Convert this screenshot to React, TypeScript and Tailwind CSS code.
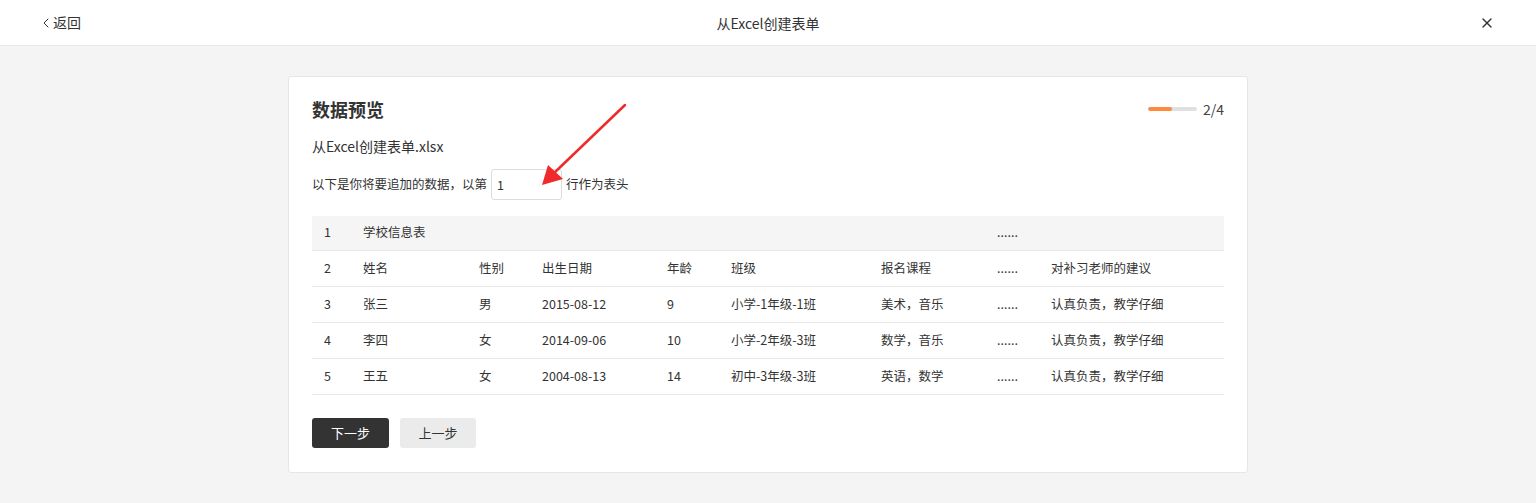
import { ChevronLeft, X } from 'lucide-react';

const cols = [
  { w: 'w-[39px]' },
  { w: 'w-[116px]' },
  { w: 'w-[63px]' },
  { w: 'w-[125px]' },
  { w: 'w-[64px]' },
  { w: 'w-[150px]' },
  { w: 'w-[116px]' },
  { w: 'w-[54px]' },
  { w: 'w-auto' },
];

const rows: string[][] = [
  ['1', '学校信息表', '', '', '', '', '', '......', ''],
  ['2', '姓名', '性别', '出生日期', '年龄', '班级', '报名课程', '......', '对补习老师的建议'],
  ['3', '张三', '男', '2015-08-12', '9', '小学-1年级-1班', '美术，音乐', '......', '认真负责，教学仔细'],
  ['4', '李四', '女', '2014-09-06', '10', '小学-2年级-3班', '数学，音乐', '......', '认真负责，教学仔细'],
  ['5', '王五', '女', '2004-08-13', '14', '初中-3年级-3班', '英语，数学', '......', '认真负责，教学仔细'],
];

export default function App() {
  return (
    <div className="min-h-[503px] bg-[#f4f4f4] font-['Noto_Sans_CJK_SC','Noto_Sans',sans-serif] text-[#333]">
      {/* Header */}
      <div className="h-[46px] bg-white border-b border-[#e8e8e8] flex items-center justify-between px-[38px]">
        <button className="flex items-center text-[14px] text-[#333] w-[120px]">
          <ChevronLeft className="w-[16px] h-[16px] -mr-[1px]" strokeWidth={1.5} />
          返回
        </button>
        <div className="text-[14px] leading-none">从Excel创建表单</div>
        <div className="w-[120px] flex justify-end pr-[3px]">
          <X className="w-[16px] h-[16px]" strokeWidth={2} />
        </div>
      </div>

      {/* Card */}
      <div className="pt-[30px] pb-[30px] flex justify-center">
        <div className="relative w-[960px] bg-white border border-[#e6e6e6] rounded-[3px] pl-[23px] pr-[23px] pt-[18px] pb-[24px]">
          <div className="flex items-center justify-between h-[28px]">
            <h2 className="text-[18px] font-bold leading-none">数据预览</h2>
            <div className="flex items-center gap-[6px]">
              <div className="w-[49px] h-[4px] rounded-full bg-[#e0e0e0] overflow-hidden">
                <div className="w-[24px] h-full bg-[#ff8a3d] rounded-full" />
              </div>
              <span className="text-[14px] text-[#444] leading-none">2/4</span>
            </div>
          </div>

          <div className="mt-[13px] text-[14px] leading-[20px]">从Excel创建表单.xlsx</div>

          <div className="mt-[13px] flex items-center text-[12.5px] leading-none">
            <span>以下是你将要追加的数据，以第</span>
            <input
              defaultValue="1"
              className="mx-[4px] w-[71px] h-[31px] border border-[#dcdcdc] rounded-[3px] px-[5px] text-[12.5px] outline-none"
            />
            <span>行作为表头</span>
          </div>

          <table className="mt-[16px] w-[912px] text-[12.5px] border-collapse table-fixed">
            <colgroup>
              {cols.map((c, i) => (
                <col key={i} className={c.w} />
              ))}
            </colgroup>
            <tbody>
              {rows.map((r, ri) => (
                <tr
                  key={ri}
                  className={`${ri === 0 ? 'bg-[#f5f5f5] h-[34px]' : 'h-[36px]'} border-b border-[#e8e8e8]`}
                >
                  {r.map((cell, ci) => (
                    <td key={ci} className="px-[12px] whitespace-nowrap align-middle">
                      {cell}
                    </td>
                  ))}
                </tr>
              ))}
            </tbody>
          </table>

          <div className="mt-[23px] flex gap-[11px]">
            <button className="w-[77px] h-[30px] rounded-[3px] bg-[#333] text-white text-[13px]">下一步</button>
            <button className="w-[76px] h-[30px] rounded-[3px] bg-[#ebebeb] text-[#333] text-[13px]">上一步</button>
          </div>

          {/* Annotation arrow */}
          <svg
            className="absolute left-[250px] top-[24px] pointer-events-none"
            width="90"
            height="90"
            viewBox="0 0 90 90"
          >
            <line x1="86" y1="4" x2="14" y2="73" stroke="#f02a2a" strokeWidth="2.5" strokeLinecap="round" />
            <polygon points="3,84 9,64 24,78" fill="#f02a2a" />
          </svg>
        </div>
      </div>
    </div>
  );
}
